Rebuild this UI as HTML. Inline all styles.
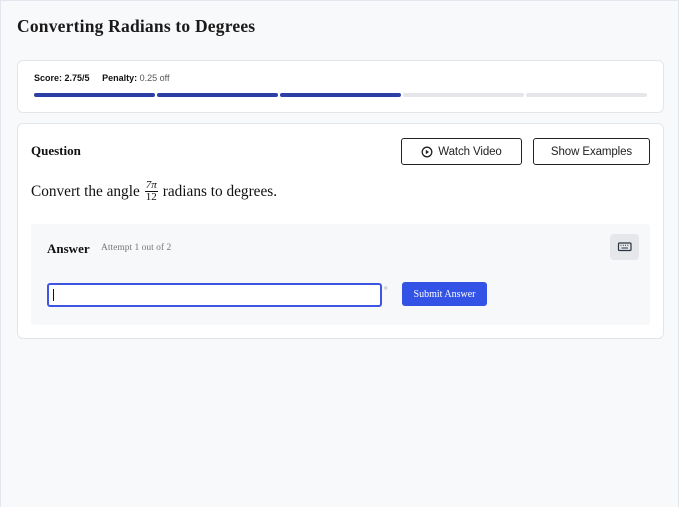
<!DOCTYPE html><html><head><style>
*{margin:0;padding:0;box-sizing:border-box}
body{width:679px;height:507px;background:#f8f9fb;position:relative;overflow:hidden;font-family:"Liberation Serif",serif;color:#111}
.page{position:absolute;left:0;top:0;width:679px;height:507px;border:1px solid #e3e6ec;border-bottom:none}
.a{position:absolute}
.card{background:#fff;border:1px solid #e2e5ea;border-radius:6px}
.sans{font-family:"Liberation Sans",sans-serif}
.seg{position:absolute;top:93px;height:4px;width:121px;border-radius:2px}
.btn{border:1px solid #222;border-radius:3px;background:#fff;font-family:"Liberation Sans",sans-serif;font-size:11.5px;letter-spacing:-0.1px;display:flex;align-items:center;justify-content:center;color:#222}
</style></head><body><div class="page"></div>
<div class="a" style="left:17px;top:16px;font-size:17.5px;font-weight:bold;color:#1a1a1a;letter-spacing:0.2px">Converting Radians to Degrees</div>
<div class="a card" style="left:17px;top:60px;width:647px;height:53px"></div>
<div class="a sans" style="left:34px;top:73px;font-size:9px;color:#111"><b>Score:</b> <b>2.75/5</b>&nbsp;&nbsp;&nbsp;&nbsp;&nbsp;<b>Penalty:</b> <span style="color:#555">0.25 off</span></div>
<div class="seg" style="left:34px;background:#2b3fa6"></div>
<div class="seg" style="left:157px;background:#2b3fa6"></div>
<div class="seg" style="left:280px;background:#2b3fa6"></div>
<div class="seg" style="left:403px;background:#e4e6ea"></div>
<div class="seg" style="left:526px;background:#e4e6ea"></div>
<div class="a card" style="left:17px;top:123px;width:647px;height:216px"></div>
<div class="a" style="left:31px;top:143px;font-size:13px;font-weight:bold">Question</div>
<div class="a btn" style="left:401px;top:138px;width:121px;height:27px"><svg width="12" height="12" viewBox="0 0 12 12" style="margin-right:5px"><circle cx="6" cy="6" r="4.8" fill="none" stroke="#222" stroke-width="1.3"/><path d="M4.8 3.8L8 6L4.8 8.2Z" fill="#222"/></svg>Watch Video</div>
<div class="a btn" style="left:533px;top:138px;width:117px;height:27px">Show Examples</div>
<div class="a" style="left:31px;top:180px;font-size:15.3px;display:flex;align-items:center">Convert the angle<span style="display:inline-flex;flex-direction:column;align-items:center;font-size:11px;line-height:11px;margin:0 5px"><span style="font-style:italic;border-bottom:1px solid #111;padding:0 1px">7π</span><span>12</span></span>radians to degrees.</div>
<div class="a" style="left:31px;top:224px;width:619px;height:101px;background:#f7f8fa;border-radius:3px"></div>
<div class="a" style="left:47px;top:241px;font-size:13px;font-weight:bold">Answer</div>
<div class="a" style="left:101px;top:243px;font-size:9.5px;color:#777">Attempt 1 out of 2</div>
<div class="a" style="left:610px;top:234px;width:29px;height:26px;background:#e5e7eb;border-radius:4px"><svg width="29" height="26" viewBox="0 0 29 26"><rect x="8.5" y="9" width="12.5" height="7.5" rx="1" fill="none" stroke="#2a3340" stroke-width="1.2"/><path d="M10.5 11.3h1M12.8 11.3h1M15 11.3h1M17.3 11.3h1M11.5 14h6.5" stroke="#2a3340" stroke-width="1"/></svg></div>
<div class="a" style="left:47px;top:283px;width:335px;height:24px;background:#fff;border:2px solid #3d55e0;border-radius:3px"><div style="position:absolute;left:4px;top:4px;width:1px;height:12px;background:#111"></div></div>
<div class="a" style="left:384px;top:285px;font-size:9px;color:#888">°</div>
<div class="a" style="left:402px;top:282px;width:85px;height:24px;background:#3352e6;border-radius:3px;color:#fff;font-size:10px;display:flex;align-items:center;justify-content:center">Submit Answer</div>
</body></html>
